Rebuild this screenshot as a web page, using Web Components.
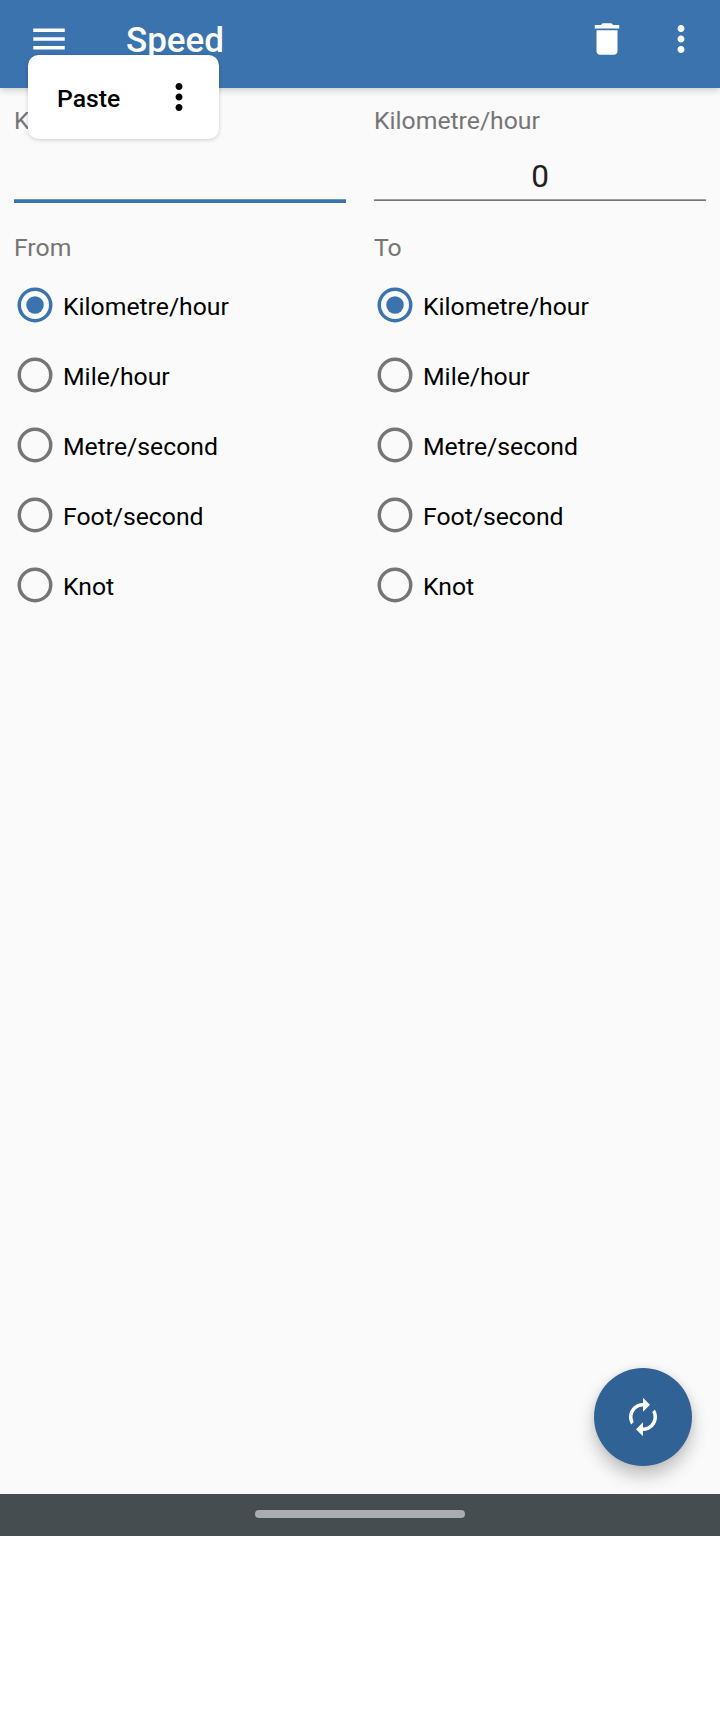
<!DOCTYPE html>
<html lang="en">
<head>
<meta charset="utf-8">
<title>Speed</title>
<style>
html, body { margin: 0; background: #fff; }
body { font-family: Roboto, "Noto Sans", sans-serif; font-size: 24.75px; }
</style>
</head>
<body>
<converter-screen></converter-screen>
<script>
const define = (name, html, init) => customElements.define(name, class extends HTMLElement {
  constructor() {
    super();
    const t = document.createElement('template');
    t.innerHTML = html;
    this.attachShadow({ mode: 'open' }).append(t.content.cloneNode(true));
  }
  connectedCallback() { if (init) init(this, this.shadowRoot); }
});

const ICONS = {
  menu: 'M3 18h18v-2H3v2zm0-5h18v-2H3v2zm0-7v2h18V6H3z',
  delete: 'M6 19c0 1.1.9 2 2 2h8c1.1 0 2-.9 2-2V7H6v12zM19 4h-3.5l-1-1h-5l-1 1H5v2h14V4z',
  more: 'M12 8c1.1 0 2-.9 2-2s-.9-2-2-2-2 .9-2 2 .9 2 2 2zm0 2c-1.1 0-2 .9-2 2s.9 2 2 2 2-.9 2-2-.9-2-2-2zm0 6c-1.1 0-2 .9-2 2s.9 2 2 2 2-.9 2-2-.9-2-2-2z',
  renew: 'M12 6v3l4-4-4-4v3c-4.42 0-8 3.58-8 8 0 1.57.46 3.03 1.24 4.26L6.7 14.8c-.45-.83-.7-1.79-.7-2.8 0-3.31 2.69-6 6-6zm6.76 1.74L17.3 9.2c.44.84.7 1.79.7 2.8 0 3.31-2.69 6-6 6v-3l-4 4 4 4v-3c4.42 0 8-3.58 8-8 0-1.57-.46-3.03-1.24-4.26z'
};
define('md-icon', `<style>:host{display:block;width:42px;height:42px;flex:none}svg{display:block}</style>
<svg width="42" height="42" viewBox="0 0 24 24" fill="currentColor"><path/></svg>`,
  (el, root) => root.querySelector('path').setAttribute('d', ICONS[el.getAttribute('name')]));

define('app-bar', `<style>
:host{display:flex;box-sizing:border-box;height:88px;padding:18px 18px 0 28px;background:#3b73af;color:#fff;align-items:flex-start;box-shadow:0 2px 7px rgba(0,0,0,.2);position:relative}
h1{margin:2px 0 0 56px;font-size:35px;line-height:42px;font-weight:500;flex:1}
.actions{display:flex;gap:32px}
</style><md-icon name="menu"></md-icon><h1><slot></slot></h1>
<div class="actions"><md-icon name="delete"></md-icon><md-icon name="more"></md-icon></div>`);

define('unit-field', `<style>
:host{display:block}
.label{color:#757575;line-height:30px}
.value{box-sizing:border-box;height:63px;padding-top:22px;text-align:center;font-size:31.5px;line-height:38px;color:#212121}
.line{height:2px;background:linear-gradient(#a0a0a0 50%,#757575 50%)}
:host([focused]) .line{height:4px;background:linear-gradient(#6c96c3 25%,#3b73af 25%)}
</style><div class="label"></div><div class="value"><slot></slot></div><div class="line"></div>`,
  (el, root) => root.querySelector('.label').textContent = el.getAttribute('label'));

define('radio-item', `<style>
:host{display:flex;height:70px;align-items:center;color:#000}
svg{width:42px;height:42px;flex:none;color:#757575}
.text{margin:3px 0 0 7px;line-height:30px}
.dot{display:none}
:host([checked]) svg{color:#3b73af}
:host([checked]) .dot{display:block}
</style><svg viewBox="0 0 24 24"><circle cx="12" cy="12" r="9" fill="none" stroke="currentColor" stroke-width="2"/><circle class="dot" cx="12" cy="12" r="5" fill="currentColor"/></svg>
<span class="text"><slot></slot></span>`);

define('unit-group', `<style>
:host{display:block}
.title{color:#757575;line-height:30px;margin-bottom:7px}
</style><div class="title"></div><slot></slot>`,
  (el, root) => root.querySelector('.title').textContent = el.getAttribute('label'));

define('context-menu', `<style>
:host{display:flex;box-sizing:border-box;width:191px;height:84px;padding:0 19px 0 29px;align-items:center;justify-content:space-between;background:#fff;color:#000;border-radius:10.5px;font-weight:500;box-shadow:0 1px 4px rgba(0,0,0,.18)}
span{margin-top:2px}
</style><span><slot></slot></span><md-icon name="more"></md-icon>`);

define('action-button', `<style>
:host{display:flex;width:98px;height:98px;border-radius:50%;align-items:center;justify-content:center;background:#316295;color:#fff;box-shadow:0 10px 17px rgba(0,0,0,.23),0 0 7px rgba(0,0,0,.08)}
</style><md-icon name="renew"></md-icon>`);

define('nav-bar', `<style>
:host{display:flex;height:42px;background:#454d51;justify-content:center;align-items:flex-start;position:relative}
i{width:210px;height:8px;margin-top:16px;border-radius:4px;background:#a9adb0}
</style><i></i>`);

const UNITS = ['Kilometre/hour', 'Mile/hour', 'Metre/second', 'Foot/second', 'Knot'];
const radios = UNITS.map((u, i) => `<radio-item${i ? '' : ' checked'}>${u}</radio-item>`).join('');
define('converter-screen', `<style>
:host{display:flex;flex-direction:column;height:1536px;position:relative;background:#fafafa}
main{flex:1;display:grid;grid-template-columns:1fr 1fr;grid-template-rows:127px 1fr;column-gap:28px;padding:18px 14px 0}
context-menu{position:absolute;left:28px;top:55px}
action-button{position:absolute;left:594px;top:1368px}
</style>
<app-bar>Speed</app-bar>
<main>
<unit-field label="Kilometre/hour" focused></unit-field>
<unit-field label="Kilometre/hour">0</unit-field>
<unit-group label="From">${radios}</unit-group>
<unit-group label="To">${radios}</unit-group>
</main>
<nav-bar></nav-bar>
<context-menu>Paste</context-menu>
<action-button></action-button>`);
</script>
</body>
</html>
